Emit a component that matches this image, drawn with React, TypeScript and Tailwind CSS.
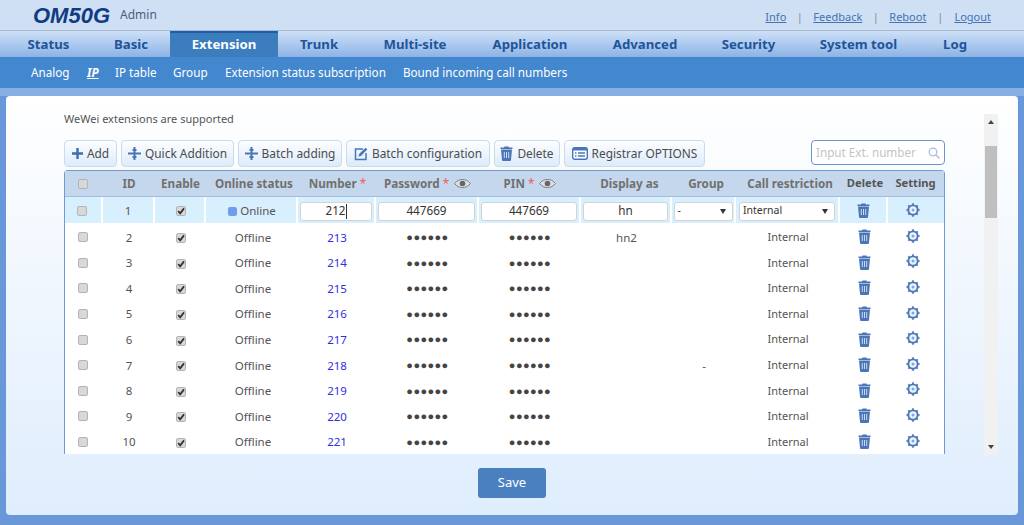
import React from "react";

const font = { fontFamily: '"Noto Sans", "Open Sans", sans-serif' };
const logoFont = { fontFamily: '"Liberation Sans", Arial, sans-serif' };

const Trash = ({ c = "#4a76b8" }: { c?: string }) => (
  <svg width="13" height="15" viewBox="0 0 13 15" className="block">
    <path d="M4.500 0.500h4l.5 1h3.500v1.500H.5V1.500h3.500z" fill={c} />
    <path d="M1 3.500h11l-1 10.200c0 .7-.6 1.300-1.300 1.300H3.300c-.7 0-1.300-.6-1.300-1.300z" fill={c} />
    <path d="M4.300 6v6M6.500 6v6M8.700 6v6" stroke="#dbe6f5" strokeWidth="0.9" />
  </svg>
);

const Gear = () => (
  <svg width="14" height="14" viewBox="0 0 14 14" className="block">
    <path d="M7 .3v13.400M.3 7h13.400M2.300 2.300l9.400 9.400M11.700 2.300l-9.400 9.400" stroke="#4a76b8" strokeWidth="1.700" />
    <circle cx="7" cy="7" r="5.600" fill="#4a76b8" />
    <circle cx="7" cy="7" r="3.700" fill="#edf3fb" />
    <circle cx="7" cy="7" r="1.500" fill="#86a6d4" />
  </svg>
);

const Eye = () => (
  <svg width="17" height="9" viewBox="0 0 17 9" className="block">
    <path d="M.5 4.500C3 1.500 5.500.5 8.500.5s5.500 1 8 4c-2.500 3-5 4-8 4s-5.500-1-8-4z" fill="#dadfe8" stroke="#7c7c7c" strokeWidth="1" />
    <circle cx="8.500" cy="4.500" r="2.800" fill="#666" />
  </svg>
);

const Box = ({ checked = false, className = "" }: { checked?: boolean; className?: string }) => (
  <div className={`relative w-[10px] h-[10px] rounded-[2px] border border-[#b4b4b4] bg-[#d8d8d8] ${className}`}>
    {checked && (
      <svg width="10" height="10" viewBox="0 0 10 10" className="absolute left-[-1px] top-[-1px]">
        <path d="M2.200 5.200l2 2.200 3.800-5" fill="none" stroke="#333" strokeWidth="1.800" />
      </svg>
    )}
  </div>
);

const cols = "grid grid-cols-[38px_52px_51px_92px_78px_103px_102px_91px_64px_104px_48px_56px]";

const Cell = ({ children, className = "" }: { children?: React.ReactNode; className?: string }) => (
  <div className={`flex items-center justify-center h-full min-w-0 pt-[1px] ${className}`}>{children}</div>
);

const HiCell = ({ children, last, className = "" }: { children?: React.ReactNode; last?: boolean; className?: string }) => (
  <div className={`flex items-center justify-center h-full min-w-0 pt-[2px] border-b border-white bg-[#d8effe] ${last ? "" : "border-r-2"} ${className}`}>{children}</div>
);

const Tool = ({ icon, label, className }: { icon: React.ReactNode; label: string; className: string }) => (
  <button className={`flex items-center justify-center gap-[4px] h-[27px] rounded-[4px] border border-[#c9dbef] bg-gradient-to-b from-[#fdfeff] to-[#dcebfb] text-[11.9px] text-[#4c4c4c] ${className}`}>
    {icon}
    <span>{label}</span>
  </button>
);

const Plus = () => (
  <svg width="11" height="11" viewBox="0 0 11 11"><path d="M5.500 0v11M0 5.500h11" stroke="#3d6cb0" strokeWidth="2.400" /></svg>
);
const Plus2 = () => (
  <svg width="13" height="13" viewBox="0 0 13 13"><path d="M6.500 0v13M0 6.500h13M4.500 3h4M4.500 10h4" stroke="#4a76b8" strokeWidth="2" /></svg>
);
const EditIcon = () => (
  <svg width="14" height="14" viewBox="0 0 14 14"><path d="M9 2H1.500v10.500H12V6" fill="none" stroke="#4a76b8" strokeWidth="1.500" /><path d="M4.500 9.500l.6-2.400L11.500.8l1.800 1.800-6.400 6.300z" fill="#4a76b8" /></svg>
);
const ListIcon = () => (
  <svg width="16" height="13" viewBox="0 0 16 13"><rect x="0.700" y="0.700" width="14.600" height="11.600" rx="2" fill="#fff" stroke="#4a76b8" strokeWidth="1.400" /><path d="M1 1h14v2.500H1z" fill="#4a76b8" /><path d="M3 6h1.500M3 9h1.500M6 6h7M6 9h7" stroke="#4a76b8" strokeWidth="1.300" /></svg>
);

const Arrow = () => <span className="w-0 h-0 border-x-[3px] border-x-transparent border-t-[5px] border-t-[#333]" />;

const Field = ({ v, cursor }: { v: string; cursor?: boolean }) => (
  <div className="flex items-center justify-center w-[calc(100%-4px)] h-[19px] rounded-[3px] border border-[#d3d3d3] bg-white text-[11.7px] text-[#333]">
    {v}
    {cursor && <span className="w-px h-[15px] bg-[#333]" />}
  </div>
);

const Sel = ({ v, w }: { v: string; w: string }) => (
  <div className={`flex items-center justify-between h-[19px] rounded-[3px] border border-[#d3d3d3] bg-white pl-[3px] pr-[6px] text-[10.5px] text-[#333] ${w}`}>
    <span>{v}</span>
    <Arrow />
  </div>
);

const dots = "●●●●●●";
const rows = [
  [2, 213, "hn2", ""], [3, 214, "", ""], [4, 215, "", ""], [5, 216, "", ""], [6, 217, "", ""],
  [7, 218, "", "-"], [8, 219, "", ""], [9, 220, "", ""], [10, 221, "", ""],
] as const;

const nav: [string, string][] = [
  ["Status", "w-[87px]"], ["Basic", "w-[78px]"], ["Extension", "w-[108px]"], ["Trunk", "w-[82px]"], ["Multi-site", "w-[110px]"],
  ["Application", "w-[120px]"], ["Advanced", "w-[110px]"], ["Security", "w-[97px]"], ["System tool", "w-[123px]"], ["Log", "w-[70px]"],
];

const Th = ({ children, className = "" }: { children: React.ReactNode; className?: string }) => (
  <div className={`flex items-center justify-center gap-[5px] h-full whitespace-nowrap ${className}`}>{children}</div>
);
const Star = () => <span className="text-[#f05a5a] font-normal">*</span>;
const Dots = () => <span className="text-[11px] tracking-[0.4px] text-[#444]">{dots}</span>;

export default function App() {
  return (
    <div style={font} className="w-[1024px] h-[525px] overflow-hidden flex flex-col bg-[#6897da] text-[12px] text-[#555]">
      <header className="flex items-center justify-between h-[30px] bg-[#cfe0f5] pl-[33px] pr-[33px] shrink-0">
        <div className="flex items-center gap-[10px]">
          <span style={logoFont} className="text-[22px] font-bold italic text-[#0f3c82]">OM50G</span>
          <span className="text-[12px] text-[#4c5f7d]">Admin</span>
        </div>
        <div className="flex items-center pt-[5px] text-[11px] text-[#4472b4]">
          <span className="underline">Info</span>
          <span className="w-[27px] text-center text-[#8a8a8a]">|</span>
          <span className="underline">Feedback</span>
          <span className="w-[27px] text-center text-[#8a8a8a]">|</span>
          <span className="underline">Reboot</span>
          <span className="w-[28px] text-center text-[#8a8a8a]">|</span>
          <span className="underline">Logout</span>
        </div>
      </header>
      <nav className="flex h-[27px] pl-[5px] shrink-0 border-t border-[#a9bbd2] bg-gradient-to-b from-[#cde0f7] to-[#8db3e6]">
        {nav.map(([n, w]) => (
          <div
            key={n}
            className={`flex items-center justify-center text-[13.2px] font-bold ${w} ${n === "Extension" ? "bg-[#3b7dbd] border-t-2 border-[#1f5fa8] text-white" : "pt-[2px] text-[#1f5499]"}`}
          >
            {n}
          </div>
        ))}
      </nav>
      <div className="flex items-center gap-[16px] h-[31px] pl-[31px] bg-[#4387ce] text-[11.7px] text-white shrink-0">
        <span className="w-[40px]">Analog</span>
        <span className="w-[14px] font-bold italic underline">IP</span>
        <span className="w-[42px] whitespace-nowrap -ml-[2px]">IP table</span>
        <span className="w-[36px]">Group</span>
        <span>Extension status subscription</span>
        <span className="ml-[1px]">Bound incoming call numbers</span>
      </div>
      <div className="h-[8px] bg-[#88aee6] shrink-0" />
      <main className="flex flex-col mx-[6px] h-[419px] rounded-[4px] bg-gradient-to-b from-white to-[#dfedfd] shrink-0">
        <div className="flex items-start pt-[15px] pl-[58px]">
          <div className="w-[881px] h-[344px] overflow-hidden">
            <div className="h-[16px] mb-[13px] flex items-center text-[11px] text-[#555]">WeWei extensions are supported</div>
            <div className="flex items-start gap-[4px] h-[27px] mb-[3px]">
              <Tool className="w-[53px]" icon={<Plus />} label="Add" />
              <Tool className="w-[113px]" icon={<Plus2 />} label="Quick Addition" />
              <Tool className="w-[104px]" icon={<Plus2 />} label="Batch adding" />
              <Tool className="w-[144px]" icon={<EditIcon />} label="Batch configuration" />
              <Tool className="w-[66px]" icon={<Trash />} label="Delete" />
              <Tool className="w-[141px]" icon={<ListIcon />} label="Registrar OPTIONS" />
              <div className="ml-auto flex items-center justify-between w-[134px] h-[25px] rounded-[4px] border border-[#6f93c9] bg-white pl-[4px] pr-[4px] text-[11.7px] text-[#c4c4c4]">
                <span>Input Ext. number</span>
                <svg width="12" height="12" viewBox="0 0 12 12"><circle cx="5" cy="5" r="3.800" fill="none" stroke="#a9bedc" strokeWidth="1.300" /><path d="M8 8l3.500 3.500" stroke="#a9bedc" strokeWidth="1.500" /></svg>
              </div>
            </div>
            <div className="border-x border-t border-[#6f9ad2] rounded-t-[4px] bg-white">
              <div className={`${cols} h-[26px] items-center bg-[#c5d7ec] border-b border-[#9fbde0] font-bold text-[11.7px] text-[#707070]`}>
                <Th className="pr-[2px]"><Box /></Th>
                <Th>ID</Th>
                <Th>Enable</Th>
                <Th className="pl-[4px]">Online status</Th>
                <Th className="pl-[1px]"><span>Number <Star /></span></Th>
                <Th><span>Password <Star /></span><Eye /></Th>
                <Th><span>PIN <Star /></span><Eye /></Th>
                <Th className="pl-[6px]">Display as</Th>
                <Th className="pl-[4px]">Group</Th>
                <Th className="pl-[4px]">Call restriction</Th>
                <Th className="pl-[2px]"><span className="text-[#555] text-[11.2px]">Delete</span></Th>
                <Th className="pr-[1px]"><span className="text-[#555] text-[11.2px]">Setting</span></Th>
              </div>
              <div className={`${cols} h-[27px] text-[11.5px] text-[#555]`}>
                <HiCell><Box className="mr-[2px]" /></HiCell>
                <HiCell>1</HiCell>
                <HiCell><Box checked className="ml-[2px]" /></HiCell>
                <HiCell className="pl-[2px]">
                  <span className="flex items-center gap-[3px]"><span className="w-[9px] h-[9px] rounded-[2px] bg-[#6f9fe8]" />Online</span>
                </HiCell>
                <HiCell><Field v="212" cursor /></HiCell>
                <HiCell><Field v="447669" /></HiCell>
                <HiCell><Field v="447669" /></HiCell>
                <HiCell><Field v="hn" /></HiCell>
                <HiCell><Sel v="-" w="w-[59px]" /></HiCell>
                <HiCell><Sel v="Internal" w="w-[96px]" /></HiCell>
                <HiCell><span className="-mt-[2px]"><Trash /></span></HiCell>
                <HiCell last><span className="mr-[6px] -mt-[2px]"><Gear /></span></HiCell>
              </div>
              {rows.map(([id, num, disp, grp]) => (
                <div key={id} className={`${cols} h-[25.6px] text-[11.5px] text-[#555]`}>
                  <Cell><Box className="mr-[2px]" /></Cell>
                  <Cell>{id}</Cell>
                  <Cell><Box checked className="mt-[2px]" /></Cell>
                  <Cell className="pl-[2px]">Offline</Cell>
                  <Cell><span className="text-[#2f2fe0]">{num}</span></Cell>
                  <Cell><Dots /></Cell>
                  <Cell><Dots /></Cell>
                  <Cell>{disp}</Cell>
                  <Cell>{grp}</Cell>
                  <Cell><span className="text-[11px]">Internal</span></Cell>
                  <Cell><span className="-mt-[1px]"><Trash /></span></Cell>
                  <Cell><span className="mr-[6px] -mt-[3px]"><Gear /></span></Cell>
                </div>
              ))}
            </div>
          </div>
          <div className="flex flex-col items-center justify-between w-[14px] h-[341px] mt-[3px] ml-[39px] bg-[#f1f1f1] relative">
            <span className="mt-[6px] w-0 h-0 border-x-[3px] border-x-transparent border-b-[4px] border-b-[#444]" />
            <div className="absolute top-[32px] left-[1px] w-[12px] h-[72px] bg-[#bfbfbf]" />
            <span className="mb-[6px] w-0 h-0 border-x-[3px] border-x-transparent border-t-[4px] border-t-[#444]" />
          </div>
        </div>
        <div className="flex justify-center mt-[13px]">
          <button className="w-[68px] h-[30px] rounded-[3px] bg-[#4a80bf] text-[13px] text-white">Save</button>
        </div>
      </main>
    </div>
  );
}
